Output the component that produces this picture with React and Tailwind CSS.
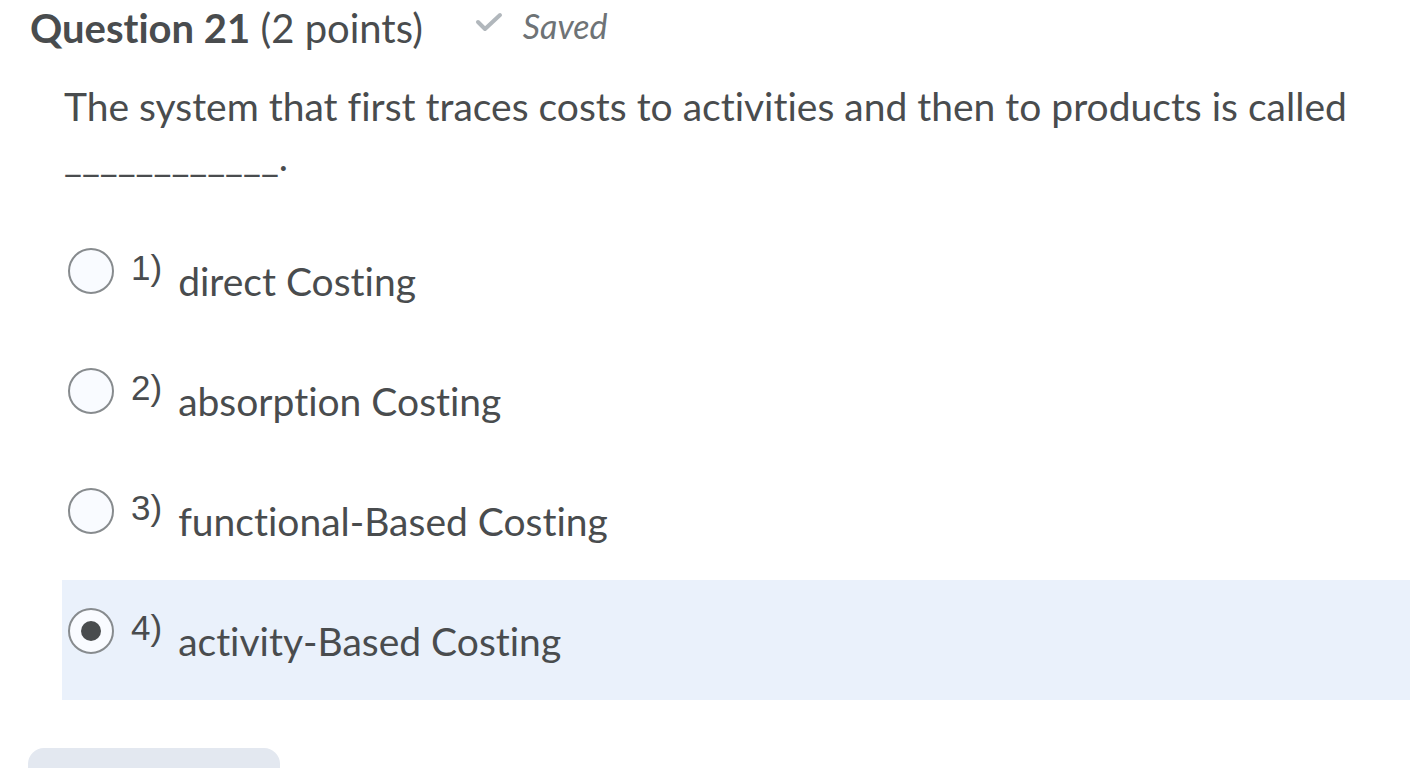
import React from "react";

const options = [
  { num: "1)", label: "direct Costing" },
  { num: "2)", label: "absorption Costing" },
  { num: "3)", label: "functional-Based Costing" },
  { num: "4)", label: "activity-Based Costing", selected: true },
];

function Radio({ checked }) {
  return (
    <span className="flex h-[46px] w-[46px] shrink-0 items-center justify-center rounded-full border-2 border-[#878b8e] bg-[#f9fbff]">
      {checked && <span className="h-[20px] w-[20px] rounded-full bg-[#494c4e]" />}
    </span>
  );
}

export default function App() {
  return (
    <div className="h-[768px] w-[1420px] overflow-hidden bg-white font-['Lato',sans-serif] text-[#494c4e] [font-variant-ligatures:none]">
      <div className="flex items-baseline pl-[30px] pt-[4px]">
        <h2 className="text-[40px] leading-[48px]">
          <span className="font-bold">Question 21</span> (2 points)
        </h2>
        <span className="ml-[52px] inline-flex -translate-y-[8px] items-center text-[#6e7376]">
          <svg width="28" height="20" viewBox="0 0 28 20" className="mr-[20px] -translate-y-[3px]">
            <path d="M3 10 L10 17 L25 3" fill="none" stroke="#b1b7bc" strokeWidth="4" strokeLinecap="round" strokeLinejoin="round" />
          </svg>
          <span className="text-[34px] italic">Saved</span>
        </span>
      </div>

      <div className="pl-[64px] pt-[22px] text-[39px] leading-[50px]">
        <p>The system that first traces costs to activities and then to products is called</p>
        <p>____________.</p>
      </div>

      <div className="mt-[39px] pl-[62px]">
        {options.map((o) => (
          <div
            key={o.num}
            className={`flex h-[120px] w-[1348px] items-center pb-[18px] pl-[6px] ${o.selected ? "bg-[#eaf1fb]" : ""}`}
          >
            <Radio checked={o.selected} />
            <span className="ml-[17px] -translate-y-[2px] font-['Liberation_Sans',sans-serif] text-[35px]">
              {o.num}
            </span>
            <span className="ml-[16px] translate-y-[11px] text-[39px]">{o.label}</span>
          </div>
        ))}
      </div>

      <div className="ml-[28px] mt-[48px] h-[40px] w-[252px] rounded-t-[16px] bg-[#e3e8f0]" />
    </div>
  );
}
